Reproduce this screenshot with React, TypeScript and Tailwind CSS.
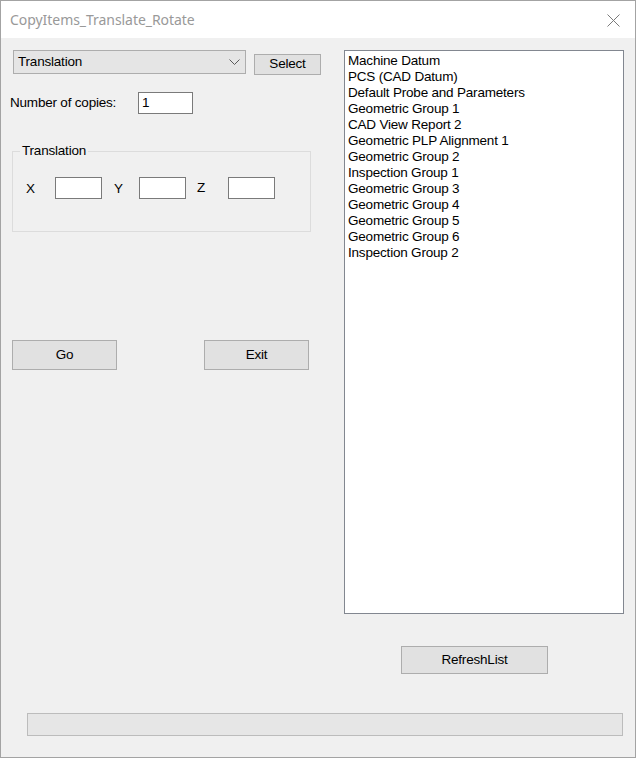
const items = [
  "Machine Datum",
  "PCS (CAD Datum)",
  "Default Probe and Parameters",
  "Geometric Group 1",
  "CAD View Report 2",
  "Geometric PLP Alignment 1",
  "Geometric Group 2",
  "Inspection Group 1",
  "Geometric Group 3",
  "Geometric Group 4",
  "Geometric Group 5",
  "Geometric Group 6",
  "Inspection Group 2",
];

function WinButton({ label, className }: { label: string; className: string }) {
  return (
    <button
      className={`flex items-center justify-center bg-[#e1e1e1] border border-[#adadad] text-black text-[13.5px] tracking-[-0.2px] ${className}`}
    >
      {label}
    </button>
  );
}

function TextBox({ value, className }: { value?: string; className: string }) {
  return (
    <div className={`bg-white border border-[#7a7a7a] flex items-center pl-[3px] text-[13.5px] ${className}`}>
      {value}
    </div>
  );
}

export default function App() {
  return (
    <div
      className="w-[636px] h-[758px] border border-[#a3a3a3] flex flex-col bg-[#f0f0f0] text-black"
      style={{ fontFamily: '"Liberation Sans", Arial, sans-serif' }}
    >
      {/* Title bar */}
      <div className="h-[37px] bg-white flex items-center justify-between pl-[9px] pr-[15px] shrink-0">
        <span
          className="text-[14px] text-[#999999] tracking-[-0.05px]"
          style={{ fontFamily: '"Noto Sans", "Open Sans", sans-serif' }}
        >
          CopyItems_Translate_Rotate
        </span>
        <svg width="13" height="13" viewBox="0 0 13 13" className="mt-[1px]">
          <path d="M0.5 0.5 L12.5 12.5 M12.5 0.5 L0.5 12.5" stroke="#7a7a7a" strokeWidth="1" fill="none" />
        </svg>
      </div>

      <div className="flex flex-1 text-[13.5px] tracking-[-0.2px]">
        {/* Left column */}
        <div className="w-[343px] flex flex-col">
          <div className="flex mt-[12px]">
            <div className="ml-[12px] w-[233px] h-[24px] bg-[#e5e5e5] border border-[#adadad] flex items-center justify-between pl-[4px] pr-[5px]">
              <span className="pt-[1px]">Translation</span>
              <svg width="11" height="6" viewBox="0 0 11 6">
                <path d="M0.5 0.5 L5.5 5.5 L10.5 0.5" stroke="#5a5a5a" strokeWidth="1" fill="none" />
              </svg>
            </div>
            <WinButton label="Select" className="ml-[8px] mt-[4px] w-[67px] h-[21px]" />
          </div>

          <div className="flex items-center mt-[17px]">
            <span className="ml-[9px] w-[128px] pt-[1px]">Number of copies:</span>
            <TextBox value="1" className="w-[55px] h-[22px]" />
          </div>

          <div className="relative ml-[11px] mt-[37px] w-[299px] h-[81px] border border-[#dcdcdc]">
            <span className="absolute left-[7px] top-[-10px] bg-[#f0f0f0] px-[2px] leading-[18px]">
              Translation
            </span>
            <div className="flex items-center mt-[24px]">
              <span className="ml-[13px] w-[29px] pt-[3px]">X</span>
              <TextBox className="w-[47px] h-[22px]" />
              <span className="ml-[12px] w-[25px] pt-[3px]">Y</span>
              <TextBox className="w-[47px] h-[22px]" />
              <span className="ml-[11px] w-[31px] pt-[1px]">Z</span>
              <TextBox className="w-[47px] h-[22px]" />
            </div>
          </div>

          <div className="flex mt-[108px]">
            <WinButton label="Go" className="ml-[11px] w-[105px] h-[30px]" />
            <WinButton label="Exit" className="ml-[87px] w-[105px] h-[30px]" />
          </div>
        </div>

        {/* Right column */}
        <div className="flex flex-col">
          <div className="mt-[12px] w-[280px] h-[564px] bg-white border border-[#828790] pl-[3px] pt-[2px] leading-[16px]">
            {items.map((item) => (
              <div key={item}>{item}</div>
            ))}
          </div>
          <WinButton label="RefreshList" className="ml-[57px] mt-[32px] w-[147px] h-[28px]" />
        </div>
      </div>

      {/* Progress bar */}
      <div className="ml-[26px] mb-[21px] w-[596px] h-[23px] bg-[#e6e6e6] border border-[#bcbcbc]" />
    </div>
  );
}
